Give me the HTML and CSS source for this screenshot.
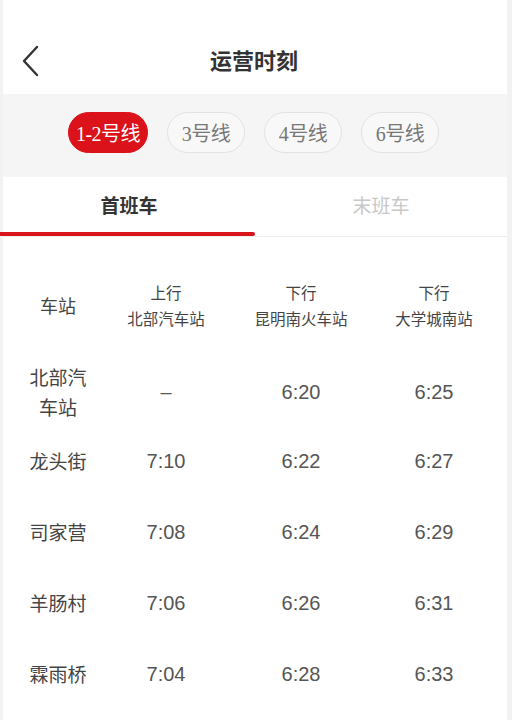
FILE: index.html
```html
<!DOCTYPE html>
<html lang="zh-CN">
<head>
<meta charset="utf-8">
<link rel="stylesheet" href="styles.css">
</head>
<body>
<div class="page">
  <header class="topbar">
    <span class="back">
      <svg width="20" height="32" viewBox="0 0 20 32"><polyline points="15,2 2,16 15,30" fill="none" stroke="#333" stroke-width="2.4" stroke-linecap="round" stroke-linejoin="round"/></svg>
    </span>
    <h1 class="title">运营时刻</h1>
  </header>
  <div class="lines">
    <span class="pill active">1-2号线</span>
    <span class="pill">3号线</span>
    <span class="pill">4号线</span>
    <span class="pill">6号线</span>
  </div>
  <div class="tabs">
    <div class="tab on">首班车</div>
    <div class="tab">末班车</div>
  </div>
  <div class="table">
    <div class="row head">
      <div class="c st">车站</div>
      <div class="c">上行<br>北部汽车站</div>
      <div class="c">下行<br>昆明南火车站</div>
      <div class="c">下行<br>大学城南站</div>
    </div>
    <div class="row r1">
      <div class="c st">北部汽车站</div>
      <div class="c t">–</div>
      <div class="c t">6:20</div>
      <div class="c t">6:25</div>
    </div>
    <div class="row">
      <div class="c st">龙头街</div>
      <div class="c t">7:10</div>
      <div class="c t">6:22</div>
      <div class="c t">6:27</div>
    </div>
    <div class="row">
      <div class="c st">司家营</div>
      <div class="c t">7:08</div>
      <div class="c t">6:24</div>
      <div class="c t">6:29</div>
    </div>
    <div class="row">
      <div class="c st">羊肠村</div>
      <div class="c t">7:06</div>
      <div class="c t">6:26</div>
      <div class="c t">6:31</div>
    </div>
    <div class="row">
      <div class="c st">霖雨桥</div>
      <div class="c t">7:04</div>
      <div class="c t">6:28</div>
      <div class="c t">6:33</div>
    </div>
  </div>
</div>
</body>
</html>
```
FILE: styles.css
```css
* { box-sizing: border-box; }
html, body { margin: 0; padding: 0; }
body {
  background: #f2f2f2;
  font-family: "Noto Sans CJK SC", "Liberation Sans", sans-serif;
  color: #444;
}
.page {
  width: 512px;
  height: 720px;
  padding: 0 5px 0 3px;
  overflow: hidden;
}
.topbar {
  background: #fff;
  height: 94px;
  display: flex;
  align-items: center;
  justify-content: center;
  position: relative;
}
.back {
  position: absolute;
  left: 19px;
  top: 45px;
  width: 20px;
  height: 32px;
  display: flex;
}
.title {
  margin: 0;
  font-size: 22px;
  font-weight: 700;
  color: #333;
  line-height: 1;
  padding-top: 24px;
  padding-right: 2px;
}
.lines {
  background: #f5f5f5;
  height: 83px;
  display: flex;
  justify-content: center;
  align-items: flex-start;
  gap: 19px;
  padding-top: 18px;
  padding-right: 3px;
}
.pill {
  height: 41px;
  width: 78px;
  border-radius: 21px;
  border: 1px solid #e2e2e2;
  background: #f8f8f8;
  color: #777;
  font-family: "Liberation Serif", "Noto Sans CJK SC", serif;
  font-size: 20px;
  display: flex;
  align-items: center;
  justify-content: center;
  letter-spacing: -0.5px;
}
.pill.active {
  background: #db1219;
  border-color: #db1219;
  color: #fff;
  width: 80px;
}
.tabs {
  background: #fff;
  height: 60px;
  display: flex;
  border-bottom: 1px solid #eeeeee;
}
.tab {
  flex: 1;
  display: flex;
  align-items: center;
  justify-content: center;
  font-size: 19px;
  color: #c8c8c8;
  padding-bottom: 5px;
  position: relative;
}
.tab.on {
  color: #333;
  font-weight: 700;
}
.tab.on::after {
  content: "";
  position: absolute;
  left: -3px;
  right: 0;
  bottom: 0;
  height: 4px;
  background: #d8141c;
  border-radius: 0 2px 2px 0;
}
.table {
  background: #fff;
  padding-top: 14px;
  height: 500px;
}
.row {
  display: grid;
  grid-template-columns: 108px 110px 160px 106px;
  height: 71px;
  align-items: center;
}
.row.head { height: 107px; }
.row.r1 { height: 67px; }
.c {
  text-align: center;
  font-size: 15.5px;
  line-height: 26px;
  color: #444;
}
.c.st {
  font-size: 19px;
  line-height: 30px;
  padding: 0 22px 0 24px;
}
.head .c.st { font-size: 18px; }
.c.t {
  font-family: "Liberation Sans", "Noto Sans CJK SC", sans-serif;
  font-size: 20px;
  color: #555;
}
```
